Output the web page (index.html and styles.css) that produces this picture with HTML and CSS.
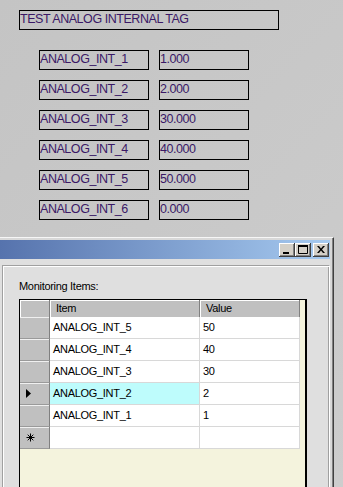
FILE: index.html
```html
<!DOCTYPE html>
<html>
<head>
<meta charset="utf-8">
<link rel="stylesheet" href="styles.css">
</head>
<body>
<div class="top">
  <div class="title-box">TEST ANALOG INTERNAL TAG</div>
  <div class="tags">
    <div class="box">ANALOG_INT_1</div><div class="box">1.000</div>
    <div class="box">ANALOG_INT_2</div><div class="box">2.000</div>
    <div class="box">ANALOG_INT_3</div><div class="box">30.000</div>
    <div class="box">ANALOG_INT_4</div><div class="box">40.000</div>
    <div class="box">ANALOG_INT_5</div><div class="box">50.000</div>
    <div class="box">ANALOG_INT_6</div><div class="box">0.000</div>
  </div>
</div>
<div class="window">
  <div class="win-in">
    <div class="titlebar">
      <div class="tbtn"><svg width="16" height="14" viewBox="0 0 16 14"><rect x="4" y="9" width="6" height="2" fill="#000"/></svg></div>
      <div class="tbtn"><svg width="16" height="14" viewBox="0 0 16 14"><path d="M3.5 3.5h9v7h-9z" fill="none" stroke="#000"/><rect x="3" y="2" width="10" height="2" fill="#000"/></svg></div>
      <div class="tbtn close"><svg width="16" height="14" viewBox="0 0 16 14"><path d="M4 3l2 0 2 2.5 2-2.5 2 0-3 3.5 3 3.5-2 0-2-2.5-2 2.5-2 0 3-3.5z" fill="#000"/></svg></div>
    </div>
    <div class="winbody">
      <div class="panel">
        <div class="label">Monitoring Items:</div>
        <div class="grid">
          <div class="row head">
            <div class="rh"></div>
            <div class="hc c1">Item</div>
            <div class="hc c2">Value</div>
          </div>
          <div class="row">
            <div class="rh"></div>
            <div class="cell c1">ANALOG_INT_5</div>
            <div class="cell c2">50</div>
          </div>
          <div class="row">
            <div class="rh"></div>
            <div class="cell c1">ANALOG_INT_4</div>
            <div class="cell c2">40</div>
          </div>
          <div class="row">
            <div class="rh"></div>
            <div class="cell c1">ANALOG_INT_3</div>
            <div class="cell c2">30</div>
          </div>
          <div class="row">
            <div class="rh"><svg width="5" height="9" viewBox="0 0 5 9"><path d="M0 0L5 4.5 0 9z" fill="#000"/></svg></div>
            <div class="cell c1 sel">ANALOG_INT_2</div>
            <div class="cell c2">2</div>
          </div>
          <div class="row">
            <div class="rh"></div>
            <div class="cell c1">ANALOG_INT_1</div>
            <div class="cell c2">1</div>
          </div>
          <div class="row">
            <div class="rh"><svg width="9" height="9" viewBox="0 0 9 9"><path d="M4.5 0.5v8M0.5 4.5h8M1.7 1.7l5.6 5.6M7.3 1.7l-5.6 5.6" stroke="#000" stroke-width="1"/></svg></div>
            <div class="cell c1"></div>
            <div class="cell c2"></div>
          </div>
        </div>
      </div>
    </div>
  </div>
</div>
</body>
</html>
```
FILE: styles.css
```css
html, body {
  margin: 0;
  padding: 0;
  height: 487px;
  overflow: hidden;
}
body {
  background: linear-gradient(135deg, #c4c4c4, #cdcdcd);
  font-family: "Liberation Sans", Arial, sans-serif;
}
.top {
  padding: 10px 0 0 19px;
}
.title-box,
.box {
  box-sizing: border-box;
  height: 20px;
  border: 1px solid #000;
  font-size: 12.5px;
  letter-spacing: -0.45px;
  line-height: 16px;
  color: #3a1866;
  white-space: nowrap;
}
.title-box {
  width: 260px;
}
.tags {
  display: grid;
  grid-template-columns: 110px 90px;
  column-gap: 10px;
  row-gap: 10px;
  margin: 20px 0 0 20px;
}
.window {
  margin-top: 17px;
  width: 334px;
  box-sizing: border-box;
  border-top: 1px solid #f6f6f6;
  border-right: 1px solid #404040;
  background: #d8d8d8;
}
.win-in {
  border-right: 1px solid #808080;
  padding: 2px 2px 0 0;
}
.titlebar {
  height: 19px;
  background: linear-gradient(to right, #5673ad, #a6caf0);
  display: flex;
  justify-content: flex-end;
  align-items: center;
  padding-right: 1px;
}
.tbtn {
  width: 16px;
  height: 14px;
  background: #d4d0c8;
  box-shadow: inset -1px -1px 0 #404040, inset 1px 1px 0 #fff, inset -2px -2px 0 #808080;
  display: flex;
}
.tbtn.close {
  margin-left: 2px;
}
.winbody {
  background: #dfdfdf;
  padding-top: 6px;
  height: 222px;
  overflow: hidden;
}
.panel {
  box-sizing: border-box;
  margin-left: 2px;
  height: 222px;
  border-top: 1px solid #a0a0a0;
  border-left: 1px solid #a0a0a0;
  border-right: 1px solid #fff;
  box-shadow: inset 1px 1px 0 #fff, inset -1px 0 0 #a0a0a0;
  padding: 14px 0 0 16px;
}
.label {
  font-size: 11px;
  letter-spacing: -0.3px;
  line-height: 13px;
  height: 13px;
  color: #000;
  margin-bottom: 6px;
}
.grid {
  width: 288px;
  height: 188px;
  box-sizing: border-box;
  border-top: 1px solid #000;
  border-left: 1px solid #000;
  border-right: 2px solid #000;
  background: #f4f3dd;
  font-size: 11px;
  letter-spacing: -0.3px;
  color: #000;
}
.row {
  display: grid;
  grid-template-columns: 30px 150px 100px;
  height: 22px;
}
.row.head {
  height: 17px;
}
.rh {
  box-sizing: border-box;
  background: #c0c0c0;
  border-right: 1px solid #808080;
  border-bottom: 1px solid #9a9a9a;
  box-shadow: inset 0 1px 0 #f0f0f0;
  display: flex;
  align-items: center;
  padding-left: 6px;
}
.row.head .rh {
  border-bottom: none;
  box-shadow: inset 1px 1px 0 #fff;
}
.hc {
  box-sizing: border-box;
  background: #c0c0c0;
  border-right: 1px solid #808080;
  box-shadow: inset 1px 1px 0 #fff;
  line-height: 17px;
  padding-left: 6px;
}
.cell {
  box-sizing: border-box;
  background: #fff;
  border-right: 1px solid #d8d8d8;
  border-bottom: 1px solid #d8d8d8;
  line-height: 21px;
  padding-left: 3px;
  white-space: nowrap;
}
.cell.sel {
  background: #befcfc;
}
```
